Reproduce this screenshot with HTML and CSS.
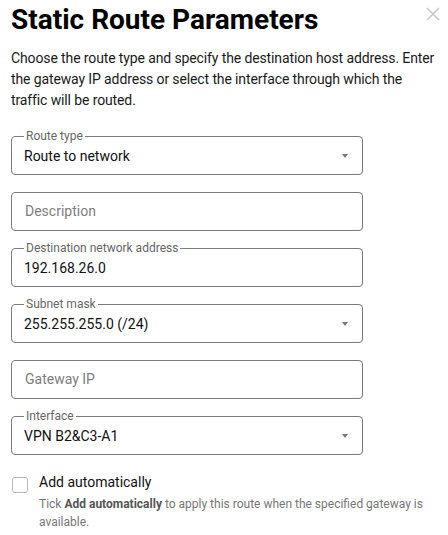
FILE: index.html
```html
<!DOCTYPE html>
<html>
<head>
<meta charset="utf-8">
<link rel="stylesheet" href="styles.css">
</head>
<body>
<div class="dialog">
  <button class="close" aria-label="Close">
    <svg width="14" height="14" viewBox="0 0 14 14"><path d="M1 1L13 13M13 1L1 13" stroke="#c8c8c8" stroke-width="1.6" fill="none"/></svg>
  </button>
  <h1 class="title">Static Route Parameters</h1>
  <p class="intro">Choose the route type and specify the destination host address. Enter the gateway IP address or select the interface through which the<br>traffic will be routed.</p>
  <div class="fields">
    <fieldset class="field labeled">
      <legend>Route type</legend>
      <div class="row"><span class="value">Route to network</span><span class="arrow"></span></div>
    </fieldset>
    <fieldset class="field plain">
      <div class="row"><span class="placeholder">Description</span></div>
    </fieldset>
    <fieldset class="field labeled">
      <legend>Destination network address</legend>
      <div class="row"><span class="value">192.168.26.0</span></div>
    </fieldset>
    <fieldset class="field labeled">
      <legend>Subnet mask</legend>
      <div class="row"><span class="value">255.255.255.0 (/24)</span><span class="arrow"></span></div>
    </fieldset>
    <fieldset class="field plain">
      <div class="row"><span class="placeholder">Gateway IP</span></div>
    </fieldset>
    <fieldset class="field labeled">
      <legend>Interface</legend>
      <div class="row"><span class="value">VPN B2&amp;C3-A1</span><span class="arrow"></span></div>
    </fieldset>
  </div>
  <div class="check">
    <span class="box"></span>
    <div class="check-text">
      <div class="check-label">Add automatically</div>
      <div class="helper">Tick <b>Add automatically</b> to apply this route when the specified gateway is available.</div>
    </div>
  </div>
</div>
</body>
</html>
```
FILE: styles.css
```css
* { box-sizing: border-box; }
html, body { margin: 0; padding: 0; background: #fff; }
body { font-family: Roboto, "Noto Sans", Arial, sans-serif; color: #111; }
.dialog { position: relative; padding: 0 5px 0 11px; width: 448px; height: 535px; overflow: hidden; }
.close { position: absolute; top: 6px; right: 7px; width: 16px; height: 16px; padding: 0; border: 0; background: none; display: flex; align-items: center; justify-content: center; }
.title { margin: 0; padding-top: 3px; font-size: 28px; line-height: 34px; font-weight: 700; color: #000; }
.intro { margin: 11px 0 0; font-size: 14px; line-height: 21px; color: #1a1a1a; letter-spacing: -0.12px; }
.fields { display: flex; flex-direction: column; gap: 10px; margin-top: 18px; width: 352px; }
.field { margin: 0; border: 1px solid #7a7a7a; border-radius: 4px; padding: 0 12px; min-width: 0; }
.field.labeled { height: 46px; padding-top: 4px; }
.field.plain { height: 39px; margin-top: 7px; padding-top: 9px; }
.field legend { font-size: 12px; line-height: 14px; color: #666; padding: 0 2px; margin: 0; }
.row { display: flex; align-items: center; height: 18px; }
.value { flex: 1; font-size: 14px; line-height: 18px; color: #111; }
.placeholder { flex: 1; font-size: 14px; line-height: 18px; color: #7d7d7d; padding-left: 1px; }
.arrow { width: 0; height: 0; border-left: 3.5px solid transparent; border-right: 3.5px solid transparent; border-top: 4px solid #777; margin-right: 2px; }
.check { display: flex; gap: 11px; margin-top: 19px; }
.box { width: 16px; height: 16px; border: 1px solid #b9b9b9; border-radius: 3px; margin-left: 1px; flex: none; margin-top: 3px; }
.check-label { font-size: 14px; line-height: 16px; color: #111; }
.helper { margin-top: 5px; font-size: 12px; line-height: 18px; color: #777; }
.helper b { color: #555; font-weight: 700; }
```
